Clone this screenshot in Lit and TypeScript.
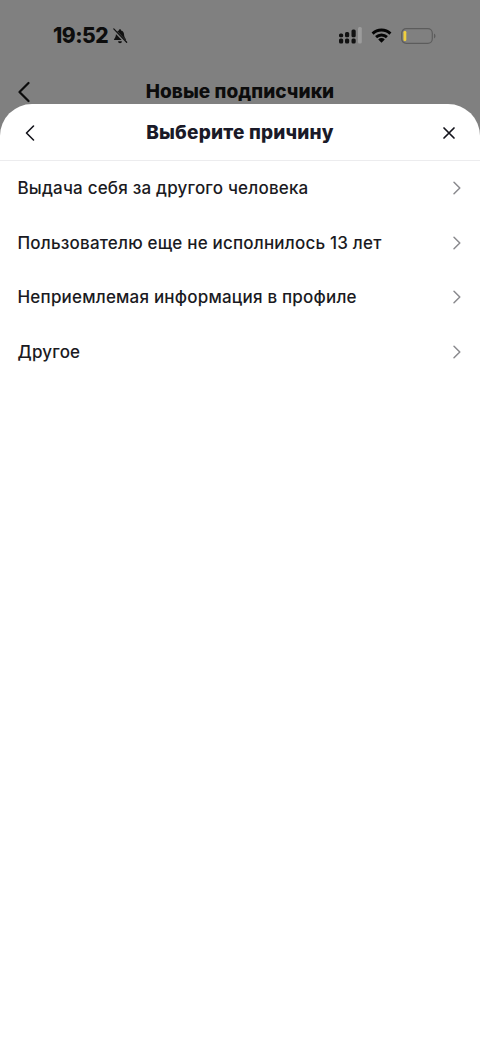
import { LitElement, html, css, svg } from "lit";
import { customElement } from "lit/decorators.js";

const reasons = [
  "Выдача себя за другого человека",
  "Пользователю еще не исполнилось 13 лет",
  "Неприемлемая информация в профиле",
  "Другое",
];

@customElement("app-root")
export class AppRoot extends LitElement {
  static styles = css`
    :host {
      display: flex;
      flex-direction: column;
      width: 480px;
      height: 1043px;
      overflow: hidden;
      background: #808080;
      font-family: Inter, "Liberation Sans", sans-serif;
      color: #14141c;
    }
    .status {
      height: 71px;
      display: flex;
      align-items: center;
      box-sizing: border-box;
      padding: 0 44px 0 53px;
      color: #0d0d0d;
    }
    .time {
      font-size: 21px;
      font-weight: 800;
      line-height: 24px;
      letter-spacing: -0.5px;
    }
    .bell { margin-left: 4px; }
    .spacer { flex: 1; }
    .signal { margin-right: 9px; }
    .wifi { margin-right: 9px; }
    .behind {
      height: 33px;
      box-sizing: border-box;
      padding: 8px 18px 0;
      display: grid;
      grid-template-columns: 1fr auto 1fr;
      align-items: center;
      color: #0c0c0c;
    }
    .behind svg { display: block; }
    .behind h2 {
      margin: 0;
      font-size: 19px;
      font-weight: 800;
      line-height: 25px;
      letter-spacing: 0.05px;
    }
    .sheet {
      flex: 1;
      background: #fff;
      border-radius: 32px 32px 0 0;
      display: flex;
      flex-direction: column;
    }
    .header {
      height: 56px;
      display: grid;
      grid-template-columns: 1fr auto 1fr;
      align-items: center;
      padding: 0 24px;
      border-bottom: 1px solid #ececee;
    }
    .header h1 {
      margin: 0;
      font-size: 19px;
      font-weight: 800;
      line-height: 57px;
      letter-spacing: 0.2px;
      color: #1a1a28;
    }
    .header svg { display: block; }
    .close { justify-self: end; }
    .row {
      height: 54.5px;
      display: flex;
      align-items: center;
      justify-content: space-between;
      padding: 0 18px 0 17.5px;
      font-size: 17px;
      font-weight: 500;
      letter-spacing: 0.2px;
      color: #1a1a22;
    }
  `;

  private chevron() {
    return html`<svg width="10" height="16" viewBox="0 0 10 16" fill="none" stroke="#8a8a8e" stroke-width="1.5" stroke-linecap="round" stroke-linejoin="round">
      <path d="M2 2.200 L7.800 8 L2 13.800" />
    </svg>`;
  }

  render() {
    return html`
      <div class="status">
        <span class="time">19:52</span>
        <svg class="bell" width="16" height="16" viewBox="0 0 18 18" fill="#111">
          <path d="M9 1.500c.7 0 1.200.5 1.200 1.200 2.200.6 3.400 2.400 3.400 4.600 0 1.300.4 3 1.900 5.200l.4 1H2.100l.4-1C4 10.300 4.400 8.600 4.400 7.300c0-2.200 1.200-4 3.400-4.600 0-.7.500-1.200 1.200-1.200z" />
          <path d="M6.800 15h4.400a2.200 2.200 0 0 1-4.400 0z" />
          ${svg`<path d="M1.500 1.500 L16 16.500" stroke="#808080" stroke-width="3.200" />
          <path d="M2 1 L16.500 16" stroke="#111" stroke-width="1.400" stroke-linecap="round" />`}
        </svg>
        <span class="spacer"></span>
        <svg class="signal" width="24" height="17" viewBox="0 0 24 17">
          <g fill="#111">
            <rect x="1" y="11.500" width="4.200" height="5" rx="1.500" />
            <rect x="7" y="11.500" width="4.200" height="5" rx="1.500" />
            <rect x="13.500" y="11.500" width="4.200" height="5" rx="1.500" />
            <rect x="1" y="6.500" width="4.200" height="3.800" rx="1.500" />
            <rect x="7" y="5" width="4.200" height="5.300" rx="1.500" />
            <rect x="13.500" y="2.500" width="4.200" height="7.800" rx="1.500" />
          </g>
          <rect x="20" y="0" width="3.800" height="16.500" rx="1.500" fill="#9c9c9c" />
        </svg>
        <svg class="wifi" width="21" height="15" viewBox="0 0 22 16" fill="none" stroke="#050505" stroke-width="3.100">
          <path d="M1.500 6 A13.500 13.500 0 0 1 20.500 6" />
          <path d="M5.200 9.700 A8.500 8.500 0 0 1 16.800 9.700" />
          <path d="M11 15.800 L7.500 12.300 A4.800 4.800 0 0 1 14.500 12.300 Z" fill="#050505" stroke="none" />
        </svg>
        <svg width="35" height="18" viewBox="0 0 35 18" fill="none">
          <rect x="0.700" y="1.700" width="30.600" height="14.600" rx="4.500" stroke="#5c5c5c" stroke-width="1.200" />
          <rect x="2.500" y="4" width="2.800" height="10" rx="1.200" fill="#f0cf3e" />
          <path d="M33 6.500 a2.800 2.800 0 0 1 0 5z" fill="#5c5c5c" />
        </svg>
      </div>
      <div class="behind">
        <svg width="14" height="22" viewBox="0 0 14 22" fill="none" stroke="#0c0c0c" stroke-width="2.200" stroke-linecap="round" stroke-linejoin="round">
          <path d="M10.500 2 L1.500 11 L10.500 20" />
        </svg>
        <h2>Новые подписчики</h2>
        <span></span>
      </div>
      <div class="sheet">
        <div class="header">
          <svg width="12" height="18" viewBox="0 0 12 18" fill="none" stroke="#14141c" stroke-width="1.600" stroke-linecap="round" stroke-linejoin="round">
            <path d="M9.500 2 L2.500 9 L9.500 16" />
          </svg>
          <h1>Выберите причину</h1>
          <svg class="close" width="14" height="14" viewBox="0 0 14 14" fill="none" stroke="#14141c" stroke-width="1.700" stroke-linecap="round">
            <path d="M2 2 L12 12 M12 2 L2 12" />
          </svg>
        </div>
        ${reasons.map((r) => html`<div class="row"><span>${r}</span>${this.chevron()}</div>`)}
      </div>
    `;
  }
}
